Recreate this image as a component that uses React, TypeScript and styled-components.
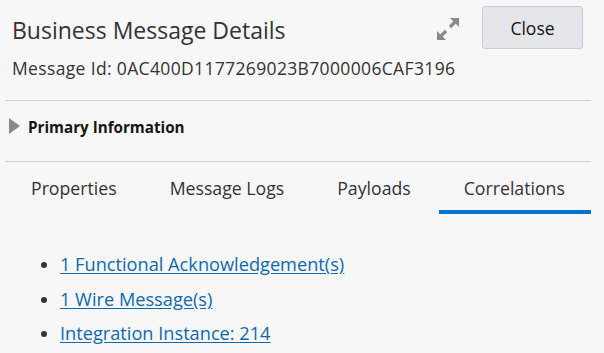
import React from "react";
import styled, { createGlobalStyle } from "styled-components";

const GlobalStyle = createGlobalStyle`
  html, body {
    margin: 0;
    padding: 0;
    background: #f7f7f7;
  }
  body {
    font-family: "Open Sans", "Noto Sans", "Liberation Sans", sans-serif;
    color: #333;
  }
`;

const Page = styled.div`
  width: 604px;
  height: 353px;
  box-sizing: border-box;
  padding: 0 13px 0 5px;
  overflow: hidden;
`;

const Header = styled.div`
  display: flex;
  justify-content: space-between;
  align-items: flex-start;
  padding: 6px 8px 0 7px;
  height: 94px;
  border-bottom: 1px solid #cfcfcf;
`;

const TitleBlock = styled.div`
  display: flex;
  flex-direction: column;
  flex: 1;
  min-width: 0;
`;

const Title = styled.h1`
  margin: 8px 0 0;
  font-size: 23px;
  font-weight: 400;
  line-height: 32px;
  color: #333;
`;

const MessageId = styled.div`
  margin-top: 10px;
  font-size: 17.5px;
  letter-spacing: 0.35px;
  line-height: 24px;
  white-space: nowrap;
`;

const Actions = styled.div`
  display: flex;
  align-items: center;
  gap: 22px;
`;

const ExpandIcon = styled.svg`
  width: 24px;
  height: 24px;
  margin-top: 2px;
`;

const CloseButton = styled.button`
  width: 101px;
  height: 43px;
  background: #e4e6ea;
  border: 1px solid #c4ced7;
  border-radius: 3px;
  font-family: inherit;
  font-size: 17.5px;
  color: #161513;
  cursor: pointer;
`;

const Section = styled.div`
  display: flex;
  align-items: flex-start;
  gap: 8px;
  height: 61px;
  padding: 16px 0 0 4px;
  box-sizing: border-box;
  border-bottom: 1px solid #cfcfcf;
`;

const Triangle = styled.span`
  width: 0;
  height: 0;
  margin-top: 1px;
  border-top: 8px solid transparent;
  border-bottom: 8px solid transparent;
  border-left: 11px solid #8a8a8a;
`;

const SectionTitle = styled.span`
  font-size: 15.2px;
  font-weight: 700;
  line-height: 20px;
  color: #161513;
`;

const TabBar = styled.div`
  display: flex;
  gap: 3px;
  padding-left: 1px;
  height: 52px;
`;

const Tab = styled.div<{ $active?: boolean }>`
  display: flex;
  align-items: center;
  padding: 4px 25px 0;
  font-size: 17.7px;
  color: #333;
  border-bottom: 4px solid ${(p) => (p.$active ? "#0572ce" : "transparent")};
  flex: ${(p) => (p.$active ? "1" : "none")};
`;

const LinkList = styled.ul`
  margin: 33px 0 0;
  padding-left: 55px;
  list-style: disc;
`;

const LinkItem = styled.li`
  font-size: 18.2px;
  line-height: 34.5px;
  color: #333;
`;

const Link = styled.a`
  color: #0e69ad;
  text-decoration: underline;
  text-underline-offset: 2px;
`;

const tabs = ["Properties", "Message Logs", "Payloads", "Correlations"];
const links = [
  "1 Functional Acknowledgement(s)",
  "1 Wire Message(s)",
  "Integration Instance: 214",
];

export default function App() {
  return (
    <Page>
      <GlobalStyle />
      <Header>
        <TitleBlock>
          <Title>Business Message Details</Title>
          <MessageId>Message Id: 0AC400D1177269023B7000006CAF3196</MessageId>
        </TitleBlock>
        <Actions>
          <ExpandIcon viewBox="0 0 24 24">
            <polygon points="23,1 23,10 14,1" fill="#8a8a8a" />
            <line x1="20" y1="4" x2="14" y2="10" stroke="#8a8a8a" strokeWidth="3.2" />
            <polygon points="1,23 1,14 10,23" fill="#8a8a8a" />
            <line x1="4" y1="20" x2="10" y2="14" stroke="#8a8a8a" strokeWidth="3.2" />
          </ExpandIcon>
          <CloseButton>Close</CloseButton>
        </Actions>
      </Header>
      <Section>
        <Triangle />
        <SectionTitle>Primary Information</SectionTitle>
      </Section>
      <TabBar>
        {tabs.map((t) => (
          <Tab key={t} $active={t === "Correlations"}>
            {t}
          </Tab>
        ))}
      </TabBar>
      <LinkList>
        {links.map((l) => (
          <LinkItem key={l}>
            <Link href="#">{l}</Link>
          </LinkItem>
        ))}
      </LinkList>
    </Page>
  );
}
